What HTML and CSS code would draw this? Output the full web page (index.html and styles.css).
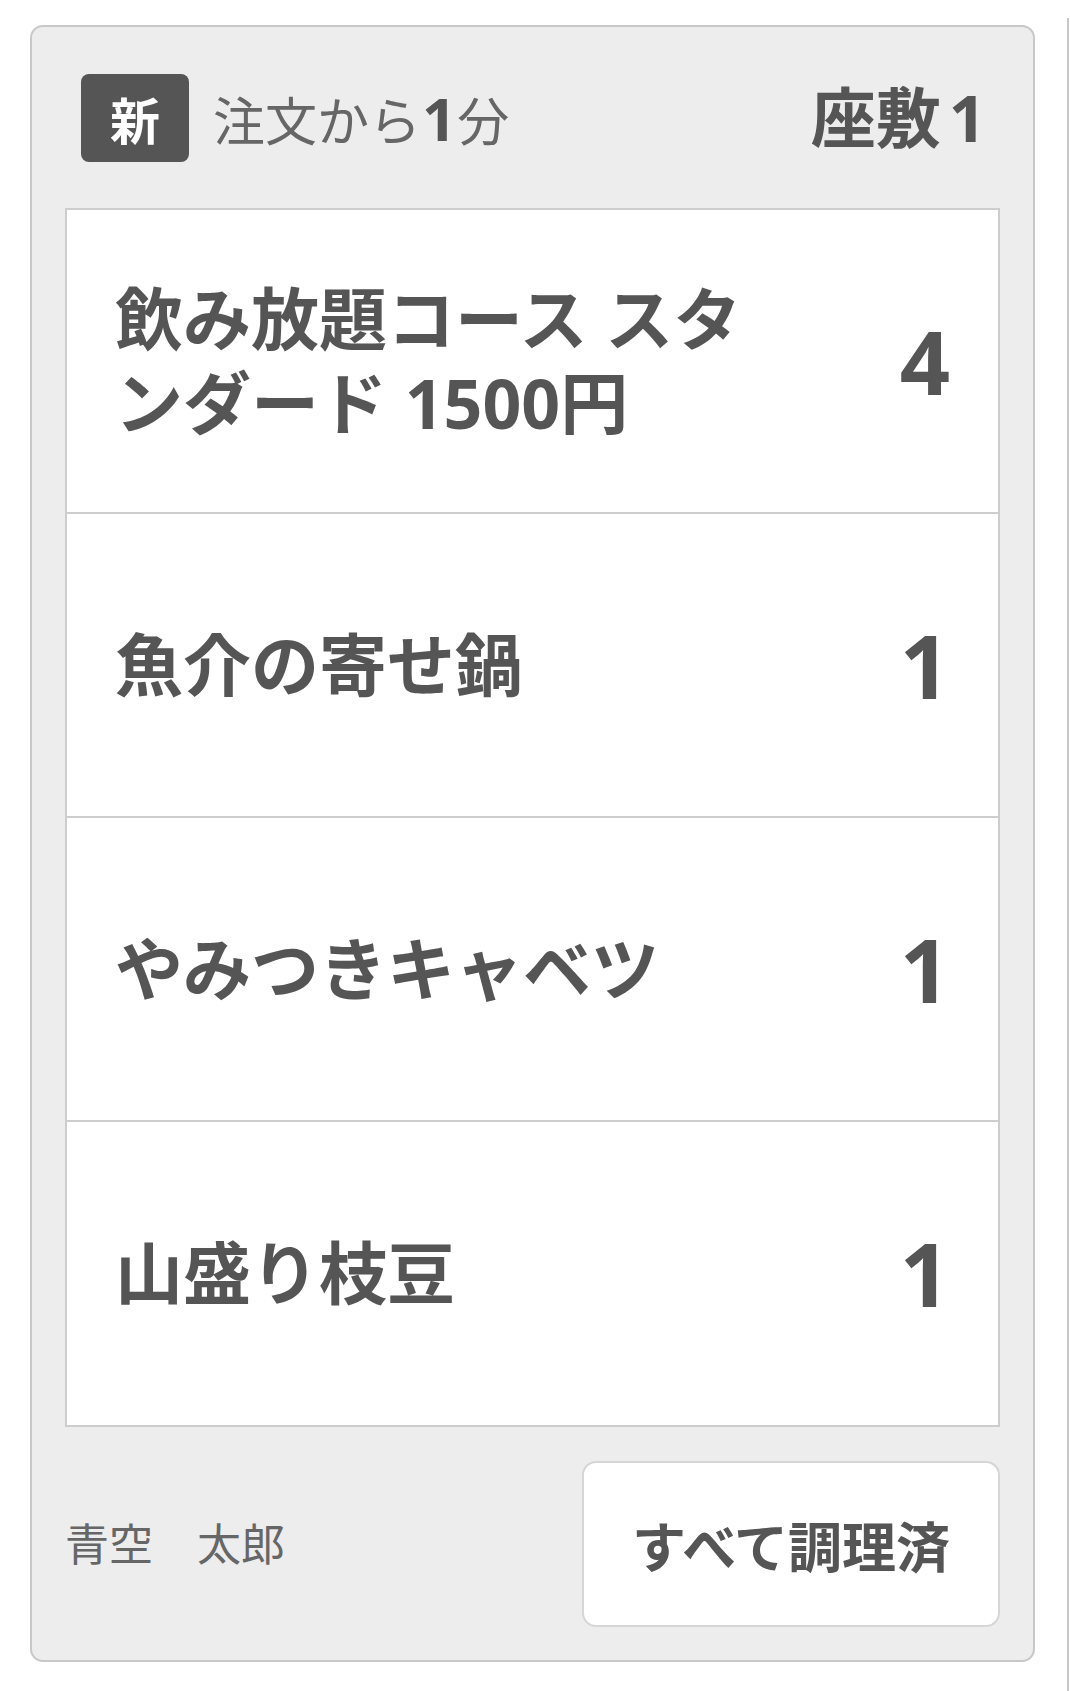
FILE: index.html
```html
<!DOCTYPE html>
<html lang="ja">
<head>
<meta charset="utf-8">
<title>注文</title>
<link rel="stylesheet" href="styles.css">
</head>
<body>
<div class="board">
  <section class="ticket">
    <header class="ticket-head">
      <div class="head-left">
        <span class="badge">新</span>
        <span class="elapsed">注文から<b class="elapsed-num">1</b>分</span>
      </div>
      <div class="seat">座敷<span class="seat-num">1</span></div>
    </header>
    <ul class="items">
      <li class="item"><span class="item-name">飲み放題コース スタンダード 1500円</span><span class="item-qty">4</span></li>
      <li class="item"><span class="item-name">魚介の寄せ鍋</span><span class="item-qty">1</span></li>
      <li class="item"><span class="item-name">やみつきキャベツ</span><span class="item-qty">1</span></li>
      <li class="item"><span class="item-name">山盛り枝豆</span><span class="item-qty">1</span></li>
    </ul>
    <footer class="ticket-foot">
      <span class="staff">青空　太郎</span>
      <button class="done-btn" type="button">すべて調理済</button>
    </footer>
  </section>
  <div class="next-ticket"></div>
</div>
</body>
</html>
```

FILE: styles.css
```css
* { box-sizing: border-box; }

html, body {
  margin: 0;
  padding: 0;
  background: #ffffff;
  overflow: hidden;
}

body {
  font-family: "Noto Sans", "Noto Sans CJK JP", sans-serif;
  color: #555555;
}

.board {
  display: flex;
  gap: 32px;
  padding: 25px 0 0 30px;
  width: 1070px;
  height: 1691px;
}

.ticket {
  flex: 0 0 1005px;
  height: 1637px;
  background: #ededed;
  border: 2px solid #c8c8c8;
  border-radius: 13px;
  padding: 0 33px 33px;
  display: flex;
  flex-direction: column;
}

.next-ticket {
  flex: 0 0 40px;
  margin-top: -7px;
  border-left: 2px solid #c8c8c8;
}

.ticket-head {
  flex: 0 0 181px;
  display: flex;
  align-items: center;
  justify-content: space-between;
  padding: 0 14px 0 16px;
}

.head-left {
  display: flex;
  align-items: center;
  gap: 24px;
}

.badge {
  width: 108px;
  height: 88px;
  border-radius: 8px;
  background: #555555;
  color: #ffffff;
  font-family: "Noto Sans CJK JP", sans-serif;
  font-weight: 700;
  font-size: 50px;
  display: flex;
  align-items: center;
  justify-content: center;
  line-height: 1;
}

.elapsed {
  font-size: 52px;
  color: #666666;
  font-weight: 400;
  line-height: 1;
}

.elapsed-num {
  font-size: 60px;
  font-weight: 700;
  color: #555555;
  margin: 0 1px;
}

.seat {
  font-size: 65px;
  font-weight: 700;
  color: #555555;
  line-height: 1;
}

.seat-num {
  margin-left: 8px;
}

.items {
  list-style: none;
  margin: 0;
  padding: 0;
  background: #ffffff;
  border: 2px solid #cdcdcd;
  flex: 0 0 1219px;
}

.item {
  height: 302px;
  display: flex;
  align-items: center;
  gap: 45px;
  padding: 0 48px;
}

.item + .item {
  border-top: 2px solid #cdcdcd;
  height: 304px;
}

.item-name {
  flex: 1;
  font-size: 68px;
  font-weight: 700;
  line-height: 1.24;
  color: #555555;
}

.item-qty {
  flex: 0 0 150px;
  text-align: right;
  font-size: 88px;
  font-weight: 700;
  line-height: 1;
  color: #555555;
}

.ticket-foot {
  flex: 1;
  display: flex;
  align-items: center;
  justify-content: space-between;
  padding-top: 34px;
}

.staff {
  font-size: 44px;
  color: #666666;
  line-height: 1;
}

.done-btn {
  width: 418px;
  height: 166px;
  background: #ffffff;
  border: 2px solid #d6d6d6;
  border-radius: 14px;
  font-family: "Noto Sans CJK JP", "Noto Sans", sans-serif;
  font-size: 54px;
  font-weight: 700;
  color: #555555;
  padding: 0;
}
```
